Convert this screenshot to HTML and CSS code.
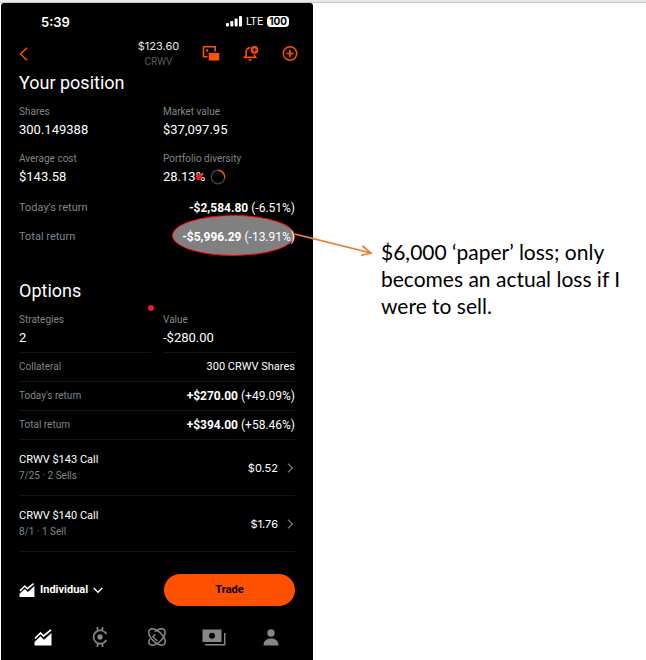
FILE: index.html
```html
<!DOCTYPE html>
<html lang="en">
<head>
<meta charset="utf-8">
<meta name="viewport" content="width=device-width, initial-scale=1">
<title>CRWV position</title>
<link rel="stylesheet" href="styles.css">
</head>
<body>
<div class="strip"></div>
<div class="board">
  <main class="phone">
    <div class="status">
      <span class="clock">5:39</span>
      <span class="signal">
        <svg width="16" height="11" viewBox="0 0 16 11" fill="#fff" aria-hidden="true"><rect x="0" y="7" width="3" height="3.500" rx="1"/><rect x="4.300" y="5" width="3" height="5.500" rx="1"/><rect x="8.600" y="2.500" width="3" height="8" rx="1"/><rect x="13" y="0" width="3" height="10.500" rx="1"/></svg>
        <span class="carrier">LTE</span>
        <span class="battery">100</span>
      </span>
    </div>

    <header class="top">
      <button class="icon back" aria-label="Back"><svg width="10" height="14" viewBox="0 0 10 14" fill="none" stroke="#ff5000" stroke-width="1.500"><path d="M8 .8 1.500 7 8 13.200"/></svg></button>
      <div class="quote"><div class="price">$123.60</div><div class="ticker">CRWV</div></div>
      <div class="actions">
        <button class="icon" aria-label="Cards"><svg width="18" height="16" viewBox="0 0 18 16"><path d="M5.500 10.700H1.500V.8H13.200V5.500" fill="none" stroke="#ff5000" stroke-width="1.600"/><rect x="4" y="3.300" width="2.200" height="2.200" fill="#ff5000"/><rect x="6.700" y="7" width="10.500" height="7.500" fill="#ff5000"/></svg></button>
        <button class="icon" aria-label="Add alert"><svg width="16" height="16" viewBox="0 0 16 16"><path d="M7.500 1.700C4.500 1.700 3.200 3.700 3.200 5.700V9L1.500 11.400H12.700L11.400 9.400V8.500" fill="none" stroke="#ff5000" stroke-width="1.600"/><path d="M5 13.200H9.200L7.100 15.500Z" fill="#ff5000"/><circle cx="11.500" cy="3.900" r="3.800" fill="#ff5000"/><path d="M11.500 1.900V5.900M9.500 3.900H13.500" stroke="#000" stroke-width="1.100"/></svg></button>
        <button class="icon" aria-label="Add to list"><svg width="16" height="16" viewBox="0 0 16 16" fill="none" stroke="#ff5000" stroke-width="1.600"><circle cx="8" cy="7.500" r="6.700"/><path d="M8 3.800V11.200M4.300 7.500H11.700"/></svg></button>
      </div>
    </header>

    <section class="section">
      <h2>Your position</h2>
      <dl class="stats">
        <div><dt>Shares</dt><dd>300.149388</dd></div>
        <div><dt>Market value</dt><dd>$37,097.95</dd></div>
        <div><dt>Average cost</dt><dd>$143.58</dd></div>
        <div><dt>Portfolio diversity</dt><dd class="share"><span>28.13%</span><svg width="16" height="16" viewBox="0 0 16 16" fill="none" stroke-width="1.400" aria-hidden="true"><circle cx="8" cy="8" r="6.700" stroke="#3c4144"/><path d="M8 1.300A6.700 6.700 0 0 1 14.550 9.300" stroke="#ff5000"/></svg><i class="dot dot-share"></i></dd></div>
      </dl>
      <dl class="returns">
        <div class="row"><dt>Today's return</dt><dd><b>-$2,584.80</b> (-6.51%)</dd></div>
        <div class="row"><dt>Total return</dt><dd class="marked"><i class="oval"></i><span class="amount"><b>-$5,996.29</b> (-13.91%)</span>
          <svg class="arrow" width="80" height="26" viewBox="0 0 80 26" fill="none" stroke="#ed7d31" stroke-width="1.700" aria-hidden="true"><path d="M0 1 76 20M67.500 13 76 20 66 22.500"/></svg></dd></div>
      </dl>
    </section>

    <section class="section options">
      <i class="dot dot-options"></i>
      <h2>Options</h2>
      <dl class="stats ruled">
        <div><dt>Strategies</dt><dd>2</dd></div>
        <div><dt>Value</dt><dd>-$280.00</dd></div>
      </dl>
      <dl class="lines">
        <div class="row"><dt>Collateral</dt><dd class="holding">300 CRWV Shares</dd></div>
        <div class="row"><dt>Today's return</dt><dd><b>+$270.00</b> (+49.09%)</dd></div>
        <div class="row"><dt>Total return</dt><dd><b>+$394.00</b> (+58.46%)</dd></div>
      </dl>
      <a class="contract" href="#call-143">
        <span><span class="name">CRWV $143 Call</span><span class="detail">7/25 · 2 Sells</span></span>
        <span class="worth">$0.52<svg width="7" height="10" viewBox="0 0 7 10" fill="none" stroke="#6f777b" stroke-width="1.300" aria-hidden="true"><path d="M1 .7 5.500 5 1 9.300"/></svg></span>
      </a>
      <a class="contract" href="#call-140">
        <span><span class="name">CRWV $140 Call</span><span class="detail">8/1 · 1 Sell</span></span>
        <span class="worth">$1.76<svg width="7" height="10" viewBox="0 0 7 10" fill="none" stroke="#6f777b" stroke-width="1.300" aria-hidden="true"><path d="M1 .7 5.500 5 1 9.300"/></svg></span>
      </a>
    </section>

    <div class="dock">
      <button class="account">
        <svg width="16" height="14" viewBox="0 0 18 16" aria-hidden="true"><path d="M1 9 6.500 3.500 9.500 6.500 16.500 .8" fill="none" stroke="#fff" stroke-width="1.800"/><path d="M.5 12.200 6.500 6.800 10 10.300 17.500 3.500V16H.5Z" fill="#fff"/></svg>
        Individual
        <svg width="10" height="7" viewBox="0 0 10 7" fill="none" stroke="#fff" stroke-width="1.400" aria-hidden="true"><path d="M.8 1 5 5.300 9.200 1"/></svg>
      </button>
      <button class="trade">Trade</button>
    </div>

    <nav class="tabs">
      <a href="#investing" aria-label="Investing"><svg width="18" height="17" viewBox="0 0 18 17"><path d="M1 9.500 6.500 4 9.500 7 17 .8" fill="none" stroke="#fff" stroke-width="1.700"/><path d="M.5 13 6.500 7.200 10 10.700 17.500 4V16.500H.5Z" fill="#fff"/></svg></a>
      <a href="#crypto" aria-label="Crypto"><svg width="18" height="20" viewBox="0 0 18 20" fill="none" stroke="#878787" stroke-width="1.700"><path d="M15.300 7A6.700 6.700 0 1 0 15.300 13M6.500 0V4M11.500 0V4M6.500 16V20M11.500 16V20"/><circle cx="9" cy="10" r="2.700" fill="#878787" stroke="none"/></svg></a>
      <a href="#discover" aria-label="Discover"><svg width="18" height="18" viewBox="0 0 18 18" fill="none" stroke="#878787" stroke-width="1.600"><path d="M12.800 5.200C8.800 1.200 4 -.4 1.800 1.800S1.200 8.800 5.200 12.800 14 18.400 16.200 16.200 16.800 9.200 12.800 5.200"/><path d="M7 3.600C10.700 .8 14.400 0 16.200 1.800S16.800 8.800 12.800 12.800 4 18.400 1.800 16.200C.6 15 .6 13 1.900 10.800"/><path d="M7.200 6.300 4.900 8.700 9.300 13" stroke-width="1.400"/></svg></a>
      <a href="#cash" aria-label="Cash"><svg width="24" height="17" viewBox="0 0 24 17"><path d="M.5 .5H19.500V13H.5ZM10 3.700A3 3 0 1 0 10 9.700 3 3 0 1 0 10 3.700Z" fill="#878787" fill-rule="evenodd"/><path d="M3 15.800H22.700V4" fill="none" stroke="#878787" stroke-width="1.500"/></svg></a>
      <a href="#profile" aria-label="Account"><svg width="16" height="17" viewBox="0 0 16 17" fill="#878787"><circle cx="8" cy="4" r="3.700"/><path d="M.5 16.500C.5 12 3.500 9.500 8 9.500S15.500 12 15.500 16.500Z"/></svg></a>
    </nav>
  </main>

  <p class="note">$6,000 ‘paper’ loss; only<br>becomes an actual loss if I<br>were to sell.</p>
</div>
</body>
</html>
```
FILE: styles.css
```css
* { box-sizing: border-box; }

body {
  margin: 0;
  background: #fff;
  color: #fff;
  font: 11px/16px Roboto, "Liberation Sans", sans-serif;
}

h2, dl, dd, p { margin: 0; }
b { font-weight: 700; }
svg { display: block; flex: none; }
a { color: inherit; text-decoration: none; }

button {
  padding: 0;
  border: 0;
  background: none;
  color: inherit;
  font: inherit;
  cursor: pointer;
}

.strip {
  height: 3px;
  background: #ebe7e4;
  border-bottom: 1px solid #c8c5c3;
}

.board {
  display: grid;
  grid-template-columns: minmax(0, 312px) 1fr;
  column-gap: 68px;
  padding-left: 1px;
}

.phone {
  min-height: calc(100vh - 3px);
  background: #000;
  border-radius: 3px 3px 0 0;
}

.status {
  display: flex;
  justify-content: space-between;
  align-items: center;
  height: 35px;
  padding: 2px 24px 0 40px;
}

.clock { font: 600 13px/16px Inter, sans-serif; }
.signal { display: flex; align-items: center; gap: 4px; }
.carrier { font-size: 11px; }

.battery {
  padding: 0 2px;
  border-radius: 4px;
  background: #fff;
  color: #000;
  font: 700 10px/11px Inter, sans-serif;
}

.top {
  display: grid;
  grid-template-columns: 1fr auto 1fr;
  align-items: center;
  height: 32px;
  padding: 0 15px 2px 18px;
}

.icon { display: flex; }
.quote { text-align: center; }
.price { color: #e6e6e6; font: 11px/16px Inter, sans-serif; }
.ticker { color: #555b5e; font-size: 10px; }

.actions {
  display: flex;
  justify-content: flex-end;
  align-items: center;
  gap: 23px;
}

.section { position: relative; padding: 0 18px; }
h2 { font-size: 18px; line-height: 26px; font-weight: 400; }

.stats {
  display: grid;
  grid-template-columns: 1fr 1fr;
  gap: 13px 12px;
  padding-top: 9px;
}

.stats dt { color: #7d878c; font-size: 10px; line-height: 14px; }
.stats dd { margin-top: 2px; font-size: 13px; line-height: 18px; }
.stats .share { position: relative; display: flex; align-items: center; gap: 5px; }

.dot {
  position: absolute;
  width: 6px;
  height: 6px;
  border-radius: 50%;
  background: #ec1c24;
}
.dot-share { left: 33px; top: 6px; }
.dot-options { left: 147px; top: 54px; }

.returns { padding-top: 7px; }

.row {
  display: flex;
  justify-content: space-between;
  align-items: center;
  height: 29px;
}
.row dt { color: #7d878c; font-size: 11px; }
.row dd { font-size: 12px; }
.row .holding { font-size: 11px; }

.marked { position: relative; }
.amount { position: relative; }
.oval {
  position: absolute;
  top: -14px;
  right: 0;
  width: 123px;
  height: 41px;
  border: 1px solid #f00;
  border-radius: 50%;
  background: #808080;
}
.arrow { position: absolute; top: 4px; left: 100%; }

.options { padding-top: 27px; }
.ruled > div { padding-bottom: 5px; border-bottom: 1px solid #151617; }
.lines .row { border-bottom: 1px solid #151617; }
.lines dt { font-size: 10px; }

.contract {
  display: flex;
  justify-content: space-between;
  align-items: center;
  height: 56px;
  border-bottom: 1px solid #151617;
}
.name, .detail { display: block; }
.name { font-size: 11px; }
.detail { color: #7d878c; font-size: 10px; }
.worth {
  display: flex;
  align-items: center;
  gap: 9px;
  padding-right: 1px;
  font: 11px/16px Inter, sans-serif;
}

.dock {
  display: grid;
  grid-template-columns: 1fr 1fr;
  align-items: center;
  column-gap: 14px;
  padding: 22px 18px 0;
}
.account {
  display: flex;
  align-items: center;
  gap: 5px;
  font-weight: 700;
}
.trade {
  height: 32px;
  border-radius: 16px;
  background: #ff5000;
  color: #000;
  font-weight: 700;
}

.tabs {
  display: grid;
  grid-template-columns: repeat(5, 1fr);
  height: 54px;
  padding: 8px 14px 0;
}
.tabs a { display: flex; align-items: center; justify-content: center; }

.note {
  padding-top: 235px;
  color: #000;
  font: 21px/27px Lato, sans-serif;
  white-space: nowrap;
}
```
